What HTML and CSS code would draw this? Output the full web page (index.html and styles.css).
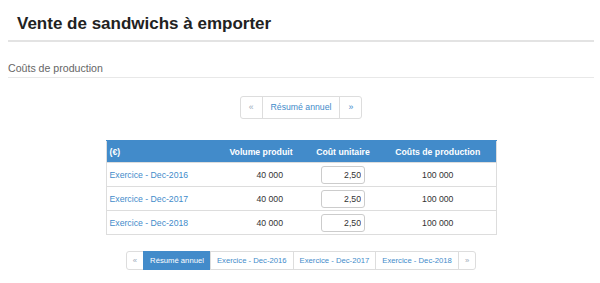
FILE: index.html
```html
<!DOCTYPE html>
<html>
<head>
  <title>Vente de sandwichs à emporter</title>
  <link rel="stylesheet" href="styles.css">
</head>
<body>

<div class="page">
  <div class="page-header">
    <h1>Vente de sandwichs à emporter</h1>
  </div>

  <div class="section-title">Coûts de production</div>

  <div class="pager-wrap">
    <ul class="pager">
      <li><a class="muted" href="#">&laquo;</a></li>
      <li><a href="#">Résumé annuel</a></li>
      <li><a href="#">&raquo;</a></li>
    </ul>
  </div>

  <table class="costs">
    <thead>
      <tr>
        <th class="col-label">(€)</th>
        <th class="col-volume">Volume produit</th>
        <th class="col-unit">Coût unitaire</th>
        <th class="col-total">Coûts de production</th>
      </tr>
    </thead>
    <tbody>
      <tr>
        <td class="col-label"><a href="#">Exercice - Dec-2016</a></td>
        <td class="col-volume">40 000</td>
        <td class="col-unit"><input type="text" value="2,50"></td>
        <td class="col-total">100 000</td>
      </tr>
      <tr>
        <td class="col-label"><a href="#">Exercice - Dec-2017</a></td>
        <td class="col-volume">40 000</td>
        <td class="col-unit"><input type="text" value="2,50"></td>
        <td class="col-total">100 000</td>
      </tr>
      <tr>
        <td class="col-label"><a href="#">Exercice - Dec-2018</a></td>
        <td class="col-volume">40 000</td>
        <td class="col-unit"><input type="text" value="2,50"></td>
        <td class="col-total">100 000</td>
      </tr>
    </tbody>
  </table>

  <div class="pager-wrap">
    <ul class="pager small">
      <li><a class="muted" href="#">&laquo;</a></li>
      <li><a class="active" href="#">Résumé annuel</a></li>
      <li><a href="#">Exercice - Dec-2016</a></li>
      <li><a href="#">Exercice - Dec-2017</a></li>
      <li><a href="#">Exercice - Dec-2018</a></li>
      <li><a class="muted" href="#">&raquo;</a></li>
    </ul>
  </div>
</div>

</body>
</html>
```

FILE: styles.css
```css
body {
  margin: 0;
  font-family: "Liberation Sans", Arial, sans-serif;
  color: #333;
  background: #fff;
}
.page {
  margin: 0 6px 0 8px;
}
.page-header {
  padding: 13px 0 5px 9px;
  border-bottom: 2px solid #e3e3e3;
}
.page-header h1 {
  margin: 0;
  font-size: 17px;
  line-height: 22px;
  font-weight: bold;
  color: #222;
}
.section-title {
  margin-top: 19px;
  padding-bottom: 2px;
  font-size: 10.6px;
  line-height: 14px;
  color: #666;
  border-bottom: 1px solid #e8e8e8;
}
.pager-wrap {
  display: flex;
  justify-content: center;
  margin-top: 18px;
}
.pager {
  display: flex;
  margin: 0;
  padding: 0;
  list-style: none;
}
.pager a {
  display: block;
  margin-left: -1px;
  padding: 0 8px;
  font-size: 8.7px;
  line-height: 21px;
  color: #428bca;
  text-decoration: none;
  border: 1px solid #ddd;
  background: #fff;
}
.pager li:first-child a {
  margin-left: 0;
  border-radius: 3px 0 0 3px;
}
.pager li:last-child a {
  border-radius: 0 3px 3px 0;
}
.pager a.muted {
  color: #9aa8b8;
}
.pager.small a {
  padding: 0 6px;
  font-size: 7.7px;
  line-height: 17px;
}
.pager a.active {
  color: #fff;
  background: #428bca;
  border-color: #428bca;
}
.costs {
  margin: 21px auto 0;
  width: 390px;
  border-collapse: collapse;
  border: 1px solid #ddd;
  font-size: 8.7px;
  table-layout: fixed;
}
.costs th,
.costs td {
  box-sizing: border-box;
}
.costs th {
  height: 22px;
  padding: 0 3px;
  background: #428bca;
  color: #fff;
  font-weight: bold;
  text-align: center;
  border-top: 1px solid #428bca;
}
.costs td {
  height: 24px;
  padding: 0 3px;
  border-top: 1px solid #ddd;
  vertical-align: middle;
}
.costs .col-label {
  width: 110px;
  text-align: left;
}
.costs .col-volume {
  width: 90px;
}
.costs td.col-volume {
  text-align: right;
  padding-right: 23px;
}
.costs .col-unit {
  width: 74px;
  text-align: center;
}
.costs .col-total {
  width: 116px;
  text-align: center;
}
.costs td a {
  color: #428bca;
  text-decoration: none;
}
.costs input {
  box-sizing: border-box;
  width: 44px;
  height: 18px;
  padding: 0 3px;
  font-family: "Liberation Sans", Arial, sans-serif;
  font-size: 8.7px;
  color: #333;
  text-align: right;
  border: 1px solid #ccc;
  border-radius: 3px;
}
.costs + .pager-wrap {
  margin-top: 16px;
}
```
